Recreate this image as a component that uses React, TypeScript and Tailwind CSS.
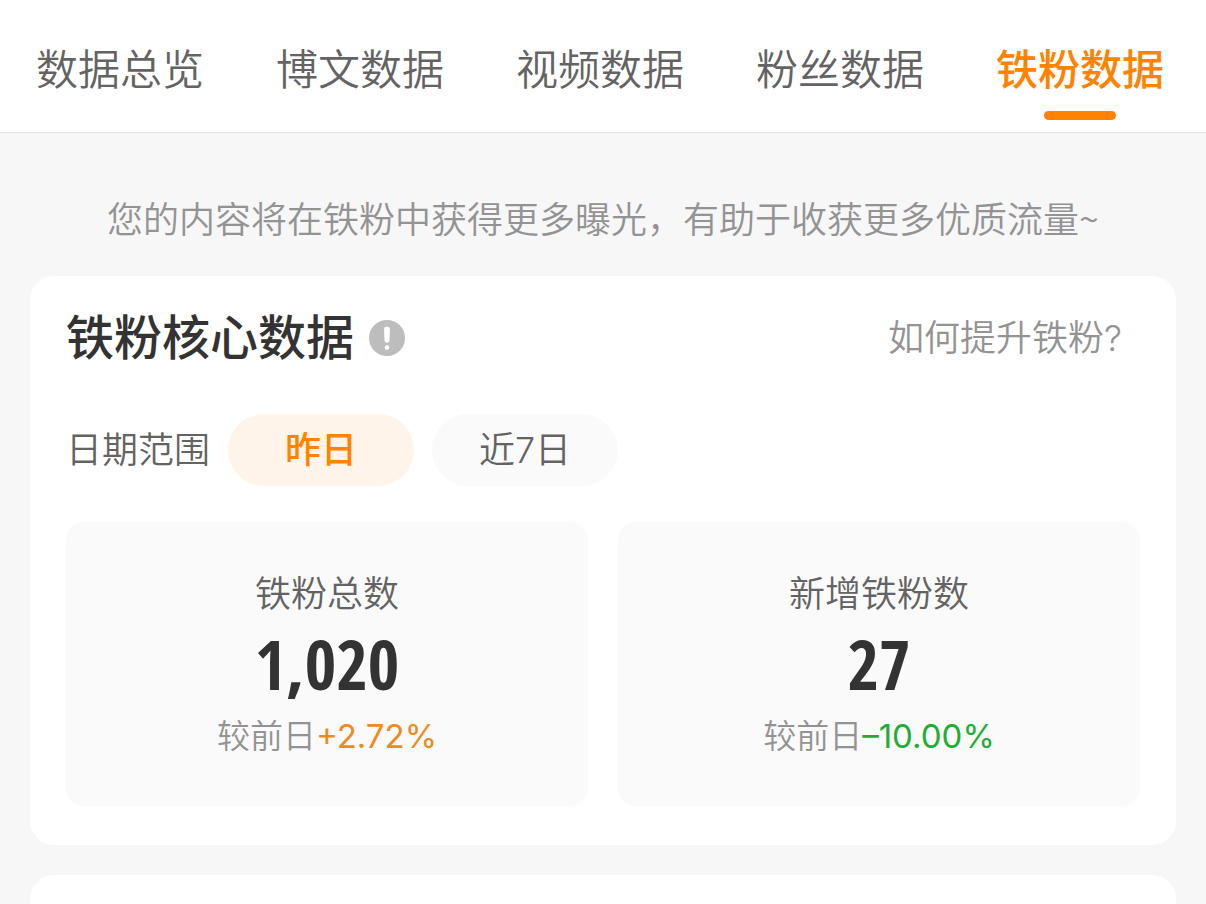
import { useState } from "react";

const tabs = ["数据总览", "博文数据", "视频数据", "粉丝数据", "铁粉数据"];
const ranges = ["昨日", "近7日"];
const stats = [
  { label: "铁粉总数", value: "1,020", change: "+2.72%", up: true },
  { label: "新增铁粉数", value: "27", change: "–10.00%", up: false },
];

function InfoIcon() {
  return (
    <svg viewBox="0 0 36 36" className="size-9" aria-hidden="true">
      <circle cx="18" cy="18" r="18" fill="#bdbdbd" />
      <path d="M18 6.4c1.8 0 3 1.2 2.9 2.9l-.4 11.3c-.1 1.3-1.1 2.2-2.5 2.2s-2.4-.9-2.5-2.2l-.4-11.3c-.1-1.7 1.1-2.9 2.9-2.9z" fill="#fff" />
      <circle cx="18" cy="27.6" r="2.3" fill="#fff" />
    </svg>
  );
}

export default function App() {
  const [tab, setTab] = useState("铁粉数据");
  const [range, setRange] = useState("昨日");

  return (
    <div className="min-h-screen bg-[#f7f7f7] font-['Inter','Noto_Sans_CJK_SC',sans-serif] font-[350] text-[#636363]">
      <nav className="flex justify-between border-b border-[#e4e4e4] bg-white pr-[42px] pl-9">
        {tabs.map((name) => (
          <button
            key={name}
            type="button"
            onClick={() => setTab(name)}
            className={
              name === tab
                ? "flex flex-col items-center pt-10 pb-3 text-[42px] leading-[60px] font-medium whitespace-nowrap text-[#ff8200]"
                : "flex flex-col items-center pt-10 pb-3 text-[42px] leading-[60px] whitespace-nowrap"
            }
          >
            {name}
            <span className={name === tab ? "mt-[11px] h-[9px] w-[72px] rounded-full bg-[#ff8200]" : "mt-[11px] h-[9px]"} />
          </button>
        ))}
      </nav>

      <main className="px-[30px] pt-[57px]">
        <p className="text-center font-['Noto_Sans_CJK_SC',sans-serif] text-[36px] leading-[54px] text-[#939393]">
          您的内容将在铁粉中获得更多曝光，有助于收获更多优质流量~
        </p>

        <section className="mt-8 rounded-[24px] bg-white px-9 pt-[26px] pb-[39px]">
          <div className="flex items-center justify-between">
            <div className="flex items-center gap-[15px]">
              <h1 className="text-[48px] leading-[72px] font-medium text-[#333]">铁粉核心数据</h1>
              <button type="button" aria-label="说明">
                <InfoIcon />
              </button>
            </div>
            <a href="#improve" className="pr-[18px] text-[36px] leading-[54px] text-[#939393]">
              如何提升铁粉?
            </a>
          </div>

          <div className="mt-10 flex items-center gap-[18px]">
            <span className="text-[36px] leading-[54px]">日期范围</span>
            {ranges.map((name) => (
              <button
                key={name}
                type="button"
                onClick={() => setRange(name)}
                className={
                  name === range
                    ? "h-[72px] w-[186px] rounded-full bg-[#fff4e9] text-[36px] font-medium text-[#ff8200]"
                    : "h-[72px] w-[186px] rounded-full bg-[#fafafa] text-[36px]"
                }
              >
                {name}
              </button>
            ))}
          </div>

          <div className="mt-9 grid grid-cols-2 gap-[30px]">
            {stats.map((s) => (
              <div key={s.label} className="flex flex-col items-center rounded-[18px] bg-[#fafafa] pt-[45px] pb-[45px]">
                <span className="text-[36px] leading-[54px]">{s.label}</span>
                <span className="pb-1 font-['Open_Sans_Condensed','Roboto_Condensed',sans-serif] text-[68px] leading-[86px] font-bold text-[#333]">
                  {s.value}
                </span>
                <span className="text-[33px] leading-[50px] text-[#939393]">
                  较前日
                  <span className={s.up ? "font-normal text-[#f08a1d]" : "font-normal text-[#1eae35]"}>{s.change}</span>
                </span>
              </div>
            ))}
          </div>
        </section>

        <section className="mt-[30px] h-[29px] rounded-t-[24px] bg-white" />
      </main>
    </div>
  );
}
